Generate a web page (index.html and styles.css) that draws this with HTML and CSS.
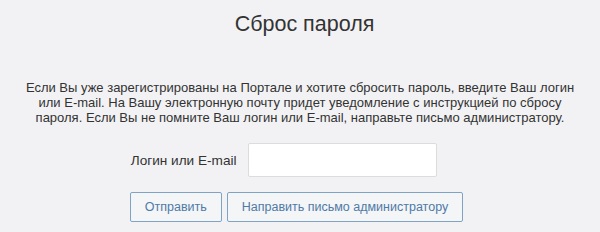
FILE: index.html
```html
<!DOCTYPE html>
<html lang="ru">
<head>
<meta charset="utf-8">
<title>Сброс пароля</title>
<link rel="stylesheet" href="styles.css">
</head>
<body>
<div class="page">
  <h1 class="title">Сброс пароля</h1>
  <p class="intro">Если Вы уже зарегистрированы на Портале и хотите сбросить пароль, введите Ваш логин или E-mail. На Вашу электронную почту придет уведомление с инструкцией по сбросу пароля. Если Вы не помните Ваш логин или E-mail, направьте письмо администратору.</p>
  <form class="form">
    <div class="row">
      <label class="label" for="login">Логин или E-mail</label>
      <input class="input" id="login" type="text">
    </div>
    <div class="actions">
      <button type="button" class="btn">Отправить</button>
      <button type="button" class="btn">Направить письмо администратору</button>
    </div>
  </form>
</div>
</body>
</html>
```
FILE: styles.css
```css
html, body {
  margin: 0;
  padding: 0;
  background: #f2f2f4;
}
body {
  font-family: "Liberation Sans", Arial, sans-serif;
  color: #333;
}
.page {
  display: flex;
  flex-direction: column;
  align-items: center;
  padding-top: 11px;
}
.title {
  margin: 0;
  padding-left: 9px;
  font-size: 21.5px;
  line-height: 26px;
  font-weight: normal;
  color: #333;
}
.intro {
  margin: 43px 0 0;
  width: 566px;
  text-align: center;
  font-size: 13px;
  line-height: 15px;
}
.form {
  margin-top: 18px;
  display: flex;
  flex-direction: column;
  gap: 15px;
  margin-left: -7px;
}
.row {
  display: flex;
  align-items: center;
  gap: 11px;
  padding-left: 1px;
}
.label {
  font-size: 13.6px;
  color: #333;
}
.input {
  box-sizing: border-box;
  width: 189px;
  height: 34px;
  margin: 0;
  border: 1px solid #dcdcdc;
  border-radius: 2px;
  background: #fff;
}
.actions {
  display: flex;
  gap: 5px;
}
.btn {
  box-sizing: border-box;
  height: 30px;
  padding: 0 14px;
  margin: 0;
  border: 1px solid #7fa3c2;
  border-radius: 2px;
  background: #f4f5f7;
  color: #4f7aa6;
  font-family: "Liberation Sans", Arial, sans-serif;
  font-size: 12.5px;
}
```
